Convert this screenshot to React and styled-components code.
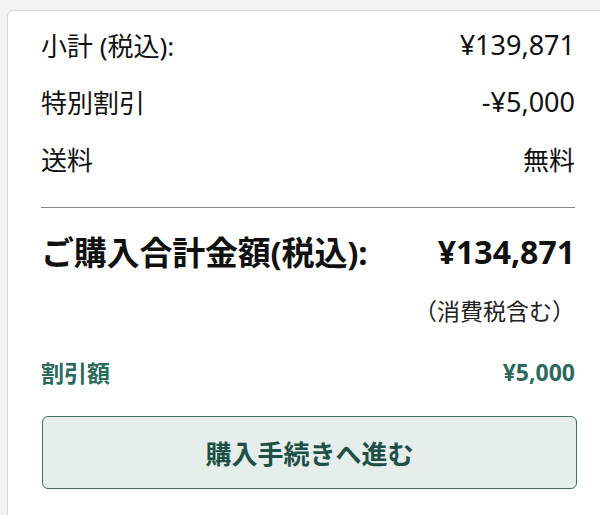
import React from "react";
import styled, { createGlobalStyle } from "styled-components";

const GlobalStyle = createGlobalStyle`
  html, body {
    margin: 0;
    padding: 0;
    background: #f3f3f3;
  }
  body {
    font-family: "Noto Sans", "Noto Sans CJK JP", sans-serif;
    color: #111;
  }
`;

const rows = [
  { label: "小計 (税込):", value: "¥139,871" },
  { label: "特別割引", value: "-¥5,000" },
  { label: "送料", value: "無料" },
];

const App = () => {
  return (
    <>
      <GlobalStyle />
      <Page>
        <Card>
          <Rows>
            {rows.map((r) => (
              <Row key={r.label}>
                <Label>{r.label}</Label>
                <Amount $cjk={r.value === "無料"}>{r.value}</Amount>
              </Row>
            ))}
          </Rows>
          <Divider />
          <TotalRow>
            <TotalLabel>ご購入合計金額(税込):</TotalLabel>
            <TotalAmount>¥134,871</TotalAmount>
          </TotalRow>
          <TaxNote>（消費税含む）</TaxNote>
          <DiscountRow>
            <DiscountLabel>割引額</DiscountLabel>
            <DiscountAmount>¥5,000</DiscountAmount>
          </DiscountRow>
          <CheckoutButton>購入手続きへ進む</CheckoutButton>
        </Card>
      </Page>
    </>
  );
};

export default App;

const Page = styled.div`
  width: 600px;
  height: 515px;
  padding: 10px 0 0 7px;
  box-sizing: border-box;
  overflow: hidden;
`;

const Card = styled.div`
  width: 620px;
  min-height: 540px;
  background: #ffffff;
  border: 1px solid #d8d8d8;
  border-radius: 6px;
  padding: 5px 0 0 33px;
  box-sizing: border-box;
`;

const Rows = styled.div`
  width: 534px;
  display: flex;
  flex-direction: column;
`;

const Row = styled.div`
  height: 57px;
  display: flex;
  align-items: center;
  justify-content: space-between;
`;

const Label = styled.span`
  font-size: 26px;
  color: #111;
`;

const Amount = styled.span`
  font-size: ${(p) => (p.$cjk ? "26px" : "27px")};
  color: #111;
`;

const Divider = styled.div`
  width: 534px;
  height: 1px;
  background: #8a8a8a;
  margin-top: 20px;
`;

const TotalRow = styled.div`
  width: 534px;
  height: 42px;
  margin-top: 22px;
  display: flex;
  align-items: center;
  justify-content: space-between;
  font-weight: 700;
`;

const TotalLabel = styled.span`
  font-size: 33px;
  letter-spacing: -0.2px;
`;

const TotalAmount = styled.span`
  font-size: 32px;
`;

const TaxNote = styled.div`
  width: 534px;
  height: 30px;
  margin-top: 23px;
  display: flex;
  align-items: center;
  justify-content: flex-end;
  font-size: 23px;
  color: #222;
`;

const DiscountRow = styled.div`
  width: 534px;
  height: 30px;
  margin-top: 32px;
  display: flex;
  align-items: center;
  justify-content: space-between;
  font-weight: 700;
  color: #2b6a5c;
`;

const DiscountLabel = styled.span`
  font-size: 23px;
`;

const DiscountAmount = styled.span`
  font-size: 23px;
`;

const CheckoutButton = styled.button`
  display: flex;
  align-items: center;
  justify-content: center;
  width: 535px;
  height: 73px;
  margin: 29px 0 0 1px;
  background: #e5eeeb;
  border: 1.5px solid #3f7163;
  border-radius: 6px;
  font-family: "Noto Sans", "Noto Sans CJK JP", sans-serif;
  font-size: 26px;
  font-weight: 700;
  color: #1f5046;
  cursor: pointer;
  padding: 0;
`;
